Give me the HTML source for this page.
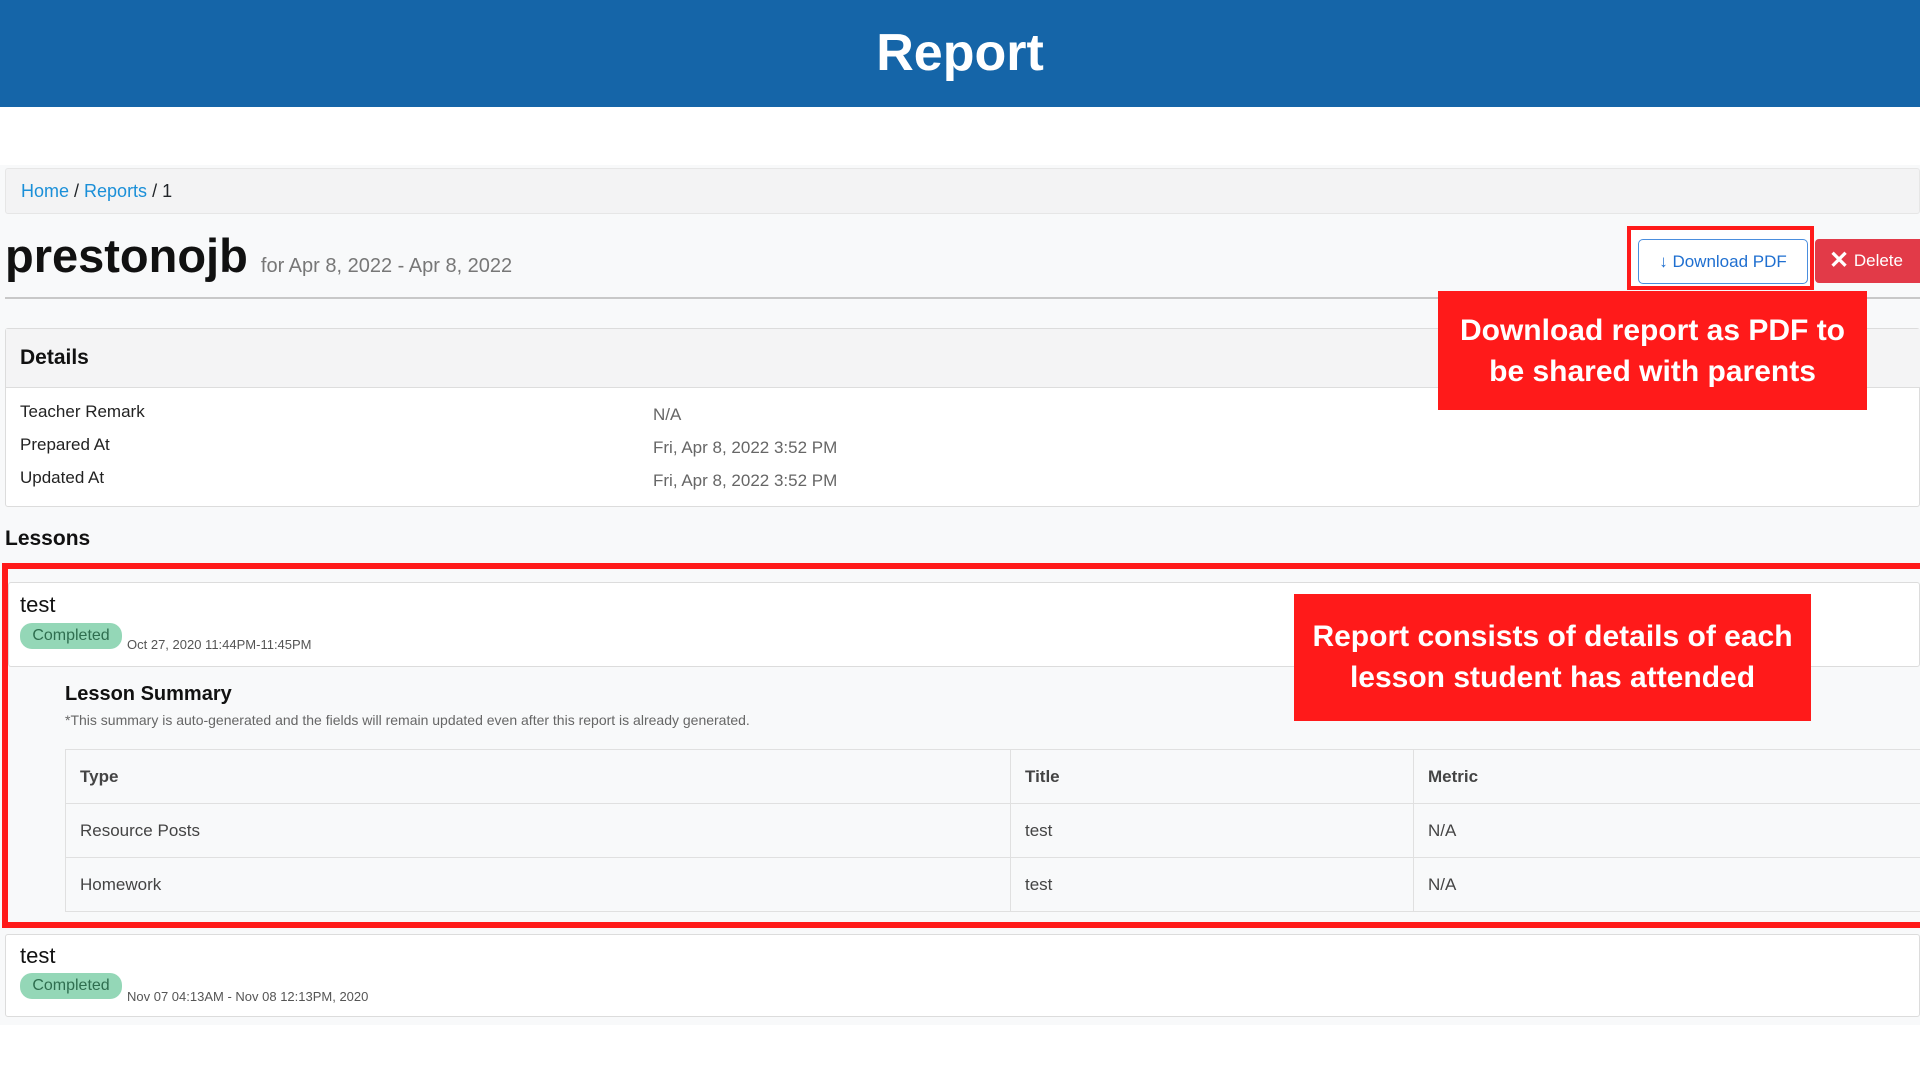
<!DOCTYPE html>
<html><head><meta charset="utf-8"><style>
*{box-sizing:border-box;margin:0;padding:0}
body{width:1920px;height:1080px;overflow:hidden;background:#fff;font-family:"Liberation Sans",sans-serif;color:#212529;position:relative}
.abs{position:absolute}
.hdr{left:0;top:0;width:1920px;height:107px;background:#1565a8;color:#fff;font-weight:bold;font-size:52px;text-align:center;line-height:107px}
.main{left:0;top:165px;width:1920px;height:860px;background:#f8f9fa}
.bc{left:5px;top:168px;width:1915px;height:46px;background:#f3f3f4;border:1px solid #e6e6e6;border-radius:3px;font-size:18px;line-height:44px;padding-left:15px}
.bc a{color:#1a8fd8;text-decoration:none}
.card{background:#fff;border:1px solid #dcdcdc;border-radius:3px}
.row{font-size:17px;color:#222}
.val{font-size:17px;color:#666}
.badge{background:#94d7b7;color:#2f6e4f;border-radius:12px;font-size:16px;text-align:center;line-height:26px}
.callout{background:#ff1a1a;color:#fff;font-weight:bold;font-size:30px;text-align:center;line-height:41px}
td{border:1px solid #e0e0e0;padding-left:14px;font-size:17px;color:#444;height:54px}
</style></head><body>
<div class="abs hdr">Report</div>
<div class="abs main"></div>
<div class="abs bc"><a>Home</a> / <a>Reports</a> / 1</div>
<div class="abs" style="left:5px;top:228px;font-size:47px;font-weight:bold;color:#111">prestonojb <span style="font-size:20px;font-weight:normal;color:#777">for Apr 8, 2022 - Apr 8, 2022</span></div>
<div class="abs" style="left:5px;top:297px;width:1915px;height:2px;background:#c8c8c8"></div>
<div class="abs" style="left:1627px;top:226px;width:187px;height:64px;border:4px solid #ff1a1a;background:#fff"></div>
<div class="abs" style="left:1638px;top:239px;width:170px;height:45px;border:1px solid #4a8ede;border-radius:5px;background:#fff;color:#1f6fd0;font-size:17px;line-height:43px;text-align:center"><b>&#8595;</b> Download PDF</div>
<div class="abs" style="left:1815px;top:239px;width:105px;height:44px;background:#e23a48;color:#fff;font-size:17px;line-height:44px;padding-left:14px;border-radius:4px 0 0 4px"><b style="font-size:24px;vertical-align:-2px">✕</b> Delete</div>
<div class="abs card" style="left:5px;top:328px;width:1915px;height:179px"></div>
<div class="abs" style="left:6px;top:329px;width:1914px;height:59px;background:#f4f4f5;border-bottom:1px solid #ddd"></div>
<div class="abs" style="left:20px;top:346px;font-size:21px;font-weight:bold;color:#111">Details</div>
<div class="abs row" style="left:20px;top:402px">Teacher Remark</div>
<div class="abs row" style="left:20px;top:435px">Prepared At</div>
<div class="abs row" style="left:20px;top:468px">Updated At</div>
<div class="abs val" style="left:653px;top:405px">N/A</div>
<div class="abs val" style="left:653px;top:438px">Fri, Apr 8, 2022 3:52 PM</div>
<div class="abs val" style="left:653px;top:471px">Fri, Apr 8, 2022 3:52 PM</div>
<div class="abs callout" style="left:1438px;top:291px;width:429px;height:119px;padding-top:19px">Download report as PDF to<br>be shared with parents</div>
<div class="abs" style="left:5px;top:527px;font-size:21px;font-weight:bold;color:#111">Lessons</div>
<div class="abs" style="left:2px;top:563px;width:1918px;height:365px;border:6px solid #ff1a1a;border-right:none"></div>
<div class="abs card" style="left:8px;top:582px;width:1912px;height:85px"></div>
<div class="abs" style="left:20px;top:592px;font-size:22px;color:#111">test</div>
<div class="abs badge" style="left:20px;top:623px;width:102px">Completed</div>
<div class="abs" style="left:127px;top:637px;font-size:13px;color:#555">Oct 27, 2020 11:44PM-11:45PM</div>
<div class="abs" style="left:65px;top:683px;font-size:20px;font-weight:bold;color:#111">Lesson Summary</div>
<div class="abs" style="left:65px;top:712px;font-size:14px;color:#666">*This summary is auto-generated and the fields will remain updated even after this report is already generated.</div>
<table class="abs" style="left:65px;top:749px;width:1860px;border-collapse:collapse;background:#f8f9fa">
<tr><td style="width:945px;font-weight:bold;color:#444">Type</td><td style="width:403px;font-weight:bold">Title</td><td style="font-weight:bold">Metric</td></tr>
<tr><td>Resource Posts</td><td>test</td><td>N/A</td></tr>
<tr><td>Homework</td><td>test</td><td>N/A</td></tr>
</table>
<div class="abs callout" style="left:1294px;top:594px;width:517px;height:127px;padding-top:22px">Report consists of details of each<br>lesson student has attended</div>
<div class="abs card" style="left:5px;top:934px;width:1915px;height:83px"></div>
<div class="abs" style="left:20px;top:943px;font-size:22px;color:#111">test</div>
<div class="abs badge" style="left:20px;top:973px;width:102px">Completed</div>
<div class="abs" style="left:127px;top:989px;font-size:13px;color:#555">Nov 07 04:13AM - Nov 08 12:13PM, 2020</div>
</body></html>
